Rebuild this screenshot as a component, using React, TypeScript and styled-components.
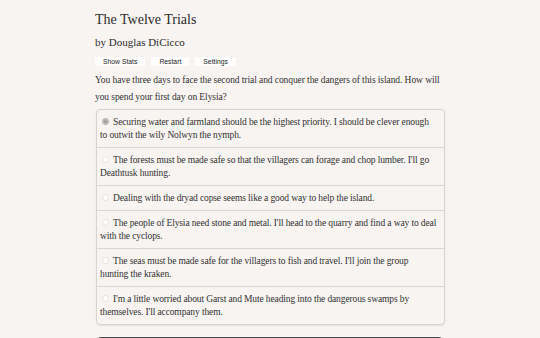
import React, { useState } from "react";
import styled, { createGlobalStyle } from "styled-components";

const GlobalStyle = createGlobalStyle`
    html, body {
        margin: 0;
        padding: 0;
        background: #f7f4f1;
    }
    body {
        font-family: "Liberation Serif", "Times New Roman", serif;
        color: #333;
    }
`;

const Page = styled.main`
    width: 350px;
    margin: 0 auto;
    padding-top: 11px;
`;

const Title = styled.h1`
    font-size: 14px;
    font-weight: normal;
    margin: 0;
    line-height: 18px;
    color: #2d2d2d;
`;

const Byline = styled.h2`
    font-size: 11px;
    font-weight: normal;
    margin: 5px 0 0;
    line-height: 16px;
    color: #2d2d2d;
`;

const Toolbar = styled.div`
    display: flex;
    gap: 6px;
    margin-top: 7px;
`;

const ToolButton = styled.button`
    font-family: "Liberation Sans", Arial, sans-serif;
    font-size: 6.8px;
    height: 9px;
    padding: 0 8px;
    line-height: 9px;
    background: #fff;
    border: none;
    border-radius: 1px;
    color: #222;
    cursor: pointer;
`;

const Intro = styled.p`
    font-size: 9.5px;
    letter-spacing: -0.08px;
    line-height: 17px;
    margin: 6px 0 0;
`;

const ChoiceList = styled.form`
    margin-top: 3px;
    margin-left: 1px;
    border: 1px solid #d6d3d0;
    border-radius: 4px;
    box-shadow: 0 1px 2px rgba(0, 0, 0, 0.08);
    overflow: hidden;
`;

const ChoiceRow = styled.label`
    display: block;
    padding: 5.5px 2px 5.5px 3px;
    font-size: 9.5px;
    letter-spacing: -0.12px;
    line-height: 13px;
    cursor: pointer;
    & + & {
        border-top: 1px solid #d9d6d3;
    }
`;

const Radio = styled.span<{ $on: boolean }>`
    display: inline-block;
    box-sizing: border-box;
    width: 7px;
    height: 7px;
    margin: 0 4px 0 2px;
    border-radius: 50%;
    vertical-align: -0.5px;
    background: ${(p) => (p.$on ? "#9a9a9a" : "#fff")};
    border: 1px solid ${(p) => (p.$on ? "#b4b4b4" : "#e2e2e2")};
    box-shadow: ${(p) => (p.$on ? "inset 0 0 0 1px #c8c8c8" : "none")};
`;

const NextButton = styled.button`
    display: block;
    width: 344px;
    height: 14px;
    margin: 12px auto 0;
    border: none;
    border-radius: 3px 3px 0 0;
    background: #4d4d4d;
`;

// non-breaking spaces keep the line breaks of the original serif metrics
const choices = [
    "Securing water and farmland should be the highest priority. I should be clever enough to\u00a0outwit the wily Nolwyn the nymph.",
    "The forests must be made safe so that the villagers can forage and chop lumber. I'll go Deathtusk hunting.",
    "Dealing with the dryad copse seems like a good way to help the island.",
    "The people of Elysia need stone and metal. I'll head to the quarry and find a way to deal with the cyclops.",
    "The seas must be made safe for the villagers to fish and travel. I'll join the group hunting\u00a0the kraken.",
    "I'm a little worried about Garst and Mute heading into the dangerous swamps by themselves. I'll accompany them.",
];

const App = () => {
    const [picked, setPicked] = useState(0);
    return (
        <>
            <GlobalStyle />
            <Page>
                <Title>The Twelve Trials</Title>
                <Byline>by Douglas DiCicco</Byline>
                <Toolbar>
                    <ToolButton>Show Stats</ToolButton>
                    <ToolButton>Restart</ToolButton>
                    <ToolButton>Settings</ToolButton>
                </Toolbar>
                <Intro>
                    You have three days to face the second trial and conquer the dangers of this island. How will
                    you spend your first day on Elysia?
                </Intro>
                <ChoiceList>
                    {choices.map((c, i) => (
                        <ChoiceRow key={i} onClick={() => setPicked(i)}>
                            <Radio $on={picked === i} />
                            {c}
                        </ChoiceRow>
                    ))}
                </ChoiceList>
                <NextButton />
            </Page>
        </>
    );
};

export default App;
